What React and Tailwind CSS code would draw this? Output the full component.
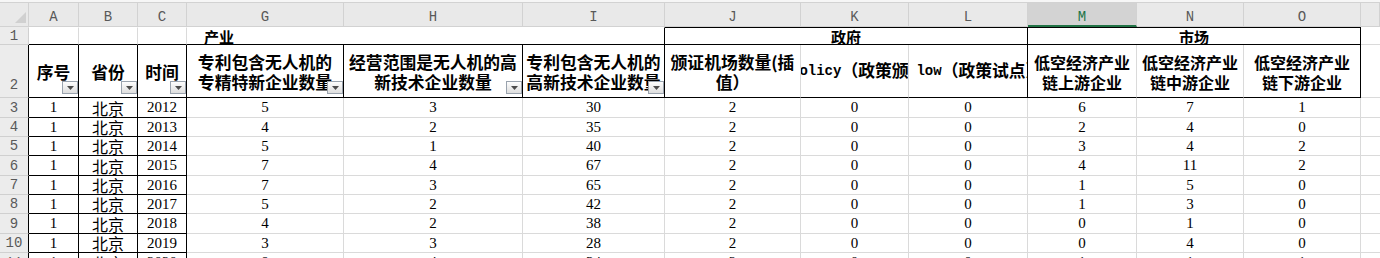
const GRID =
  'grid grid-cols-[29px_50px_59px_49px_157px_179px_142px_136px_108px_119px_109px_107px_117px_19px]';
const CJK = "font-['Noto_Sans_CJK_SC',sans-serif]";
const MONO = "font-['Liberation_Mono',monospace]";
const NUM = "font-['Liberation_Serif','Noto_Sans_CJK_SC',serif]";

const letters = ['A', 'B', 'C', 'G', 'H', 'I', 'J', 'K', 'L', 'M', 'N', 'O', ''];

const rows = [
  { n: 3, h: 'h-[20px]', v: ['1', '北京', '2012', '5', '3', '30', '2', '0', '0', '6', '7', '1'] },
  { n: 4, h: 'h-[19px]', v: ['1', '北京', '2013', '4', '2', '35', '2', '0', '0', '2', '4', '0'] },
  { n: 5, h: 'h-[19px]', v: ['1', '北京', '2014', '5', '1', '40', '2', '0', '0', '3', '4', '2'] },
  { n: 6, h: 'h-[20px]', v: ['1', '北京', '2015', '7', '4', '67', '2', '0', '0', '4', '11', '2'] },
  { n: 7, h: 'h-[19px]', v: ['1', '北京', '2016', '7', '3', '65', '2', '0', '0', '1', '5', '0'] },
  { n: 8, h: 'h-[19px]', v: ['1', '北京', '2017', '5', '2', '42', '2', '0', '0', '1', '3', '0'] },
  { n: 9, h: 'h-[20px]', v: ['1', '北京', '2018', '4', '2', '38', '2', '0', '0', '0', '1', '0'] },
  { n: 10, h: 'h-[19px]', v: ['1', '北京', '2019', '3', '3', '28', '2', '0', '0', '0', '4', '0'] },
  { n: 11, h: 'h-[20px]', v: ['1', '北京', '2020', '8', '4', '34', '2', '0', '0', '1', '1', '1'] },
];

function Filter() {
  return (
    <span className="absolute right-0 bottom-[3px] flex h-[13px] w-[16px] items-center justify-center border border-[#9aa3ae] bg-linear-to-b from-[#fdfdfd] to-[#dedede]">
      <svg width="7" height="4" viewBox="0 0 7 4">
        <path d="M0 0h7L3.5 4z" fill="#4b4b4b" />
      </svg>
    </span>
  );
}

function Head({ lines, border = 'border-r-black', filter, size = 'text-[16.8px]' }) {
  return (
    <div
      className={`relative flex flex-col items-center justify-center overflow-hidden border-r border-b border-b-black ${border} ${CJK} ${size} pt-[1px] font-bold leading-[20px] text-black`}
    >
      {lines.map((l) => (
        <span key={l} className="whitespace-nowrap">
          {l}
        </span>
      ))}
      {filter && <Filter />}
    </div>
  );
}

export default function App() {
  return (
    <div className="h-[258px] w-[1380px] overflow-hidden bg-white">
      {/* column letters */}
      <div className="bg-[#f6f6f6] pt-[2px]">
        <div className={`${GRID} h-[25px]`}>
          <div className="flex items-end justify-end border-t border-r border-b border-[#d2d2d2] bg-[#e9e9e9] pr-[2px] pb-[3px]">
            <svg width="11" height="11" viewBox="0 0 11 11">
              <path d="M11 0v11H0z" fill="#d0d0d0" />
            </svg>
          </div>
          {letters.map((l, i) =>
            l === 'M' ? (
              <div
                key={i}
                className={`flex items-center justify-center border-t border-t-[#d2d2d2] border-r border-r-[#d2d2d2] border-b-2 border-b-[#217346] bg-[#d3d3d3] pt-[5px] ${MONO} text-[14px] leading-none text-[#217346]`}
              >
                {l}
              </div>
            ) : (
              <div
                key={i}
                className={`flex items-center justify-center border-t border-r border-b border-[#d2d2d2] bg-[#e9e9e9] pt-[5px] ${MONO} text-[14px] leading-none text-[#595959]`}
              >
                {l}
              </div>
            )
          )}
        </div>
      </div>

      {/* row 1 */}
      <div className={`${GRID} h-[18px]`}>
        <div className={`flex items-center justify-center border-t border-t-[#ececec] border-r border-r-[#d0d0d0] border-b border-b-[#d0d0d0] bg-[#ececec] ${MONO} text-[14px] leading-none text-[#595959]`}>
          1
        </div>
        <div className="border-t border-t-white border-r border-r-[#dadada] border-b border-b-black" />
        <div className="border-t border-t-white border-r border-r-[#dadada] border-b border-b-black" />
        <div className="border-t border-t-white border-r border-r-[#dadada] border-b border-b-black" />
        <div className={`col-span-3 flex items-center border-t border-t-white border-r border-r-black border-b border-b-black pl-[17px] ${CJK} text-[15px] font-bold leading-none`}>
          产业
        </div>
        <div className={`col-span-3 flex items-center justify-center border-t border-t-black border-r border-r-black border-b border-b-black ${CJK} text-[15px] font-bold leading-none`}>
          政府
        </div>
        <div className={`col-span-3 flex items-center justify-center border-t border-t-black border-r border-r-black border-b border-b-black ${CJK} text-[15px] font-bold leading-none`}>
          市场
        </div>
        <div className="border-t border-t-white border-b border-b-[#dadada]" />
      </div>

      {/* row 2 */}
      <div className={`${GRID} h-[53px]`}>
        <div className={`flex items-end justify-center border-r border-r-black border-b border-b-[#d0d0d0] bg-[#ececec] pb-[1px] ${MONO} text-[14px] text-[#595959]`}>
          2
        </div>
        <Head lines={['序号']} filter />
        <Head lines={['省份']} filter />
        <Head lines={['时间']} filter />
        <Head lines={['专利包含无人机的', '专精特新企业数量']} filter />
        <Head lines={['经营范围是无人机的高', '新技术企业数量']} filter />
        <Head lines={['专利包含无人机的', '高新技术企业数量']} filter />
        <Head lines={['颁证机场数量(插', '值）']} border="border-r-[#dadada]" />
        <div className={`flex items-center overflow-hidden border-r border-r-[#dadada] border-b border-b-black ${CJK} text-[16.8px] font-bold whitespace-nowrap`}>
          <span className="ml-[-10px] flex items-center">
            <span className={`${MONO} text-[14px]`}>policy</span>
            <span>（政策颁布）</span>
          </span>
        </div>
        <div className={`flex items-center overflow-hidden border-r border-r-black border-b border-b-black ${CJK} text-[16.8px] font-bold whitespace-nowrap`}>
          <span className="ml-[-43px] flex items-center">
            <span className={`${MONO} text-[14px] whitespace-pre`}>pilot low</span>
            <span>（政策试点）</span>
          </span>
        </div>
        <Head lines={['低空经济产业', '链上游企业']} border="border-r-[#dadada]" size="text-[16px]" />
        <Head lines={['低空经济产业', '链中游企业']} border="border-r-[#dadada]" size="text-[16px]" />
        <Head lines={['低空经济产业', '链下游企业']} size="text-[16px]" />
        <div className="border-b border-b-[#dadada]" />
      </div>

      {/* data */}
      {rows.map((r) => (
        <div key={r.n} className={`${GRID} ${r.h}`}>
          <div className={`flex items-center justify-center border-r border-r-black border-b border-b-[#d0d0d0] bg-[#ececec] ${MONO} text-[14px] leading-none text-[#595959]`}>
            {r.n}
          </div>
          {r.v.map((v, i) =>
            i < 3 ? (
              <div
                key={i}
                className={`flex items-center justify-center border-r border-r-black border-b border-b-black leading-none text-black ${
                  i === 1 ? `${CJK} text-[16px]` : `${NUM} text-[15px]`
                }`}
              >
                {v}
              </div>
            ) : (
              <div
                key={i}
                className={`flex items-center justify-center border-r border-r-[#dadada] border-b border-b-[#dadada] ${NUM} text-[15px] leading-none text-black`}
              >
                {v}
              </div>
            )
          )}
          <div className="border-b border-b-[#dadada]" />
        </div>
      ))}
    </div>
  );
}
